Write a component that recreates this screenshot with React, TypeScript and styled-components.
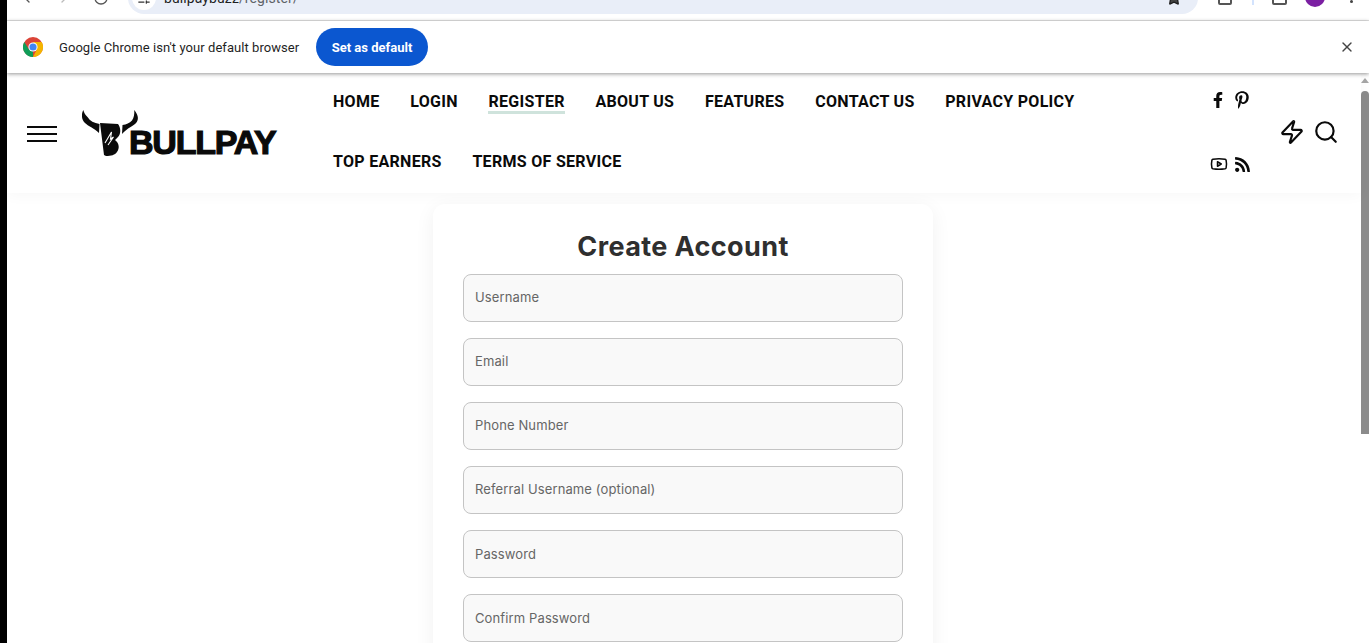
import React from 'react';
import styled, { createGlobalStyle } from 'styled-components';
import { ChevronLeft, ChevronRight, RotateCw, Star, X, Zap, Search, Youtube, SlidersHorizontal } from 'lucide-react';
import { FaFacebookF, FaPinterestP, FaRss } from 'react-icons/fa';

const Global = createGlobalStyle`
  html, body { margin: 0; padding: 0; height: 100%; overflow: hidden; background: #fff; }
  #root { height: 100%; }
  * { box-sizing: border-box; }
`;

const Screen = styled.div`
  width: 1369px;
  height: 643px;
  display: flex;
  overflow: hidden;
  background: #000;
  font-family: "Liberation Sans", Arial, sans-serif;
`;

const BlackEdge = styled.div`
  width: 7px;
  flex: none;
  background: #000;
`;

const Browser = styled.div`
  flex: 1;
  min-width: 0;
  display: flex;
  flex-direction: column;
  background: #fff;
`;

const Toolbar = styled.div`
  height: 21px;
  flex: none;
  display: flex;
  align-items: flex-end;
  overflow: hidden;
  border-bottom: 1px solid #e3e3e3;
  padding: 0 0 6px 12px;
  color: #555;
`;

const NavIcons = styled.div`
  display: flex;
  gap: 21px;
  align-items: center;
  height: 16px;
  width: 109px;
  flex: none;
  margin-bottom: 8px;
`;

const Omnibox = styled.div`
  width: 1070px;
  height: 32px;
  flex: none;
  background: #e9eef8;
  border-radius: 16px;
  display: flex;
  align-items: center;
  justify-content: space-between;
  padding: 0 16px 0 4px;
  font-family: "Roboto", sans-serif;
  font-size: 14px;
  letter-spacing: 0.1px;
  color: #1f1f1f;
`;

const SiteChip = styled.span`
  width: 24px;
  height: 24px;
  border-radius: 50%;
  background: #fff;
  margin-right: 8px;
  flex: none;
  display: flex;
  align-items: center;
  justify-content: center;
  color: #333;
`;

const Url = styled.span`
  flex: 1;
  span { color: #5f6368; }
`;

const ToolButton = styled.span<{ $w: number; $left: number }>`
  width: ${p => p.$w}px;
  height: 14px;
  flex: none;
  margin-left: ${p => p.$left}px;
  margin-bottom: 9px;
  border: 2px solid #555;
  border-radius: 2px;
`;

const ToolDivider = styled.span`
  width: 2px;
  height: 14px;
  flex: none;
  margin-left: 20px;
  margin-bottom: 9px;
  background: #d3e3fd;
`;

const Avatar = styled.span`
  width: 20px;
  height: 20px;
  border-radius: 50%;
  background: #7b1fa2;
  flex: none;
  margin-left: 18px;
  margin-bottom: 7px;
`;

const MenuDot = styled.span`
  width: 3px;
  height: 3px;
  border-radius: 50%;
  background: #444;
  flex: none;
  margin-left: 25px;
  margin-bottom: 11px;
`;

const Infobar = styled.div`
  height: 52px;
  flex: none;
  display: flex;
  align-items: center;
  padding: 0 14px 0 16px;
  background: #fff;
  position: relative;
  z-index: 2;
  box-shadow: 0 1px 4px rgba(0,0,0,.42);
  font-family: "Roboto", sans-serif;
  font-size: 13px;
  color: #1f1f1f;
`;

const InfoText = styled.span`
  margin-left: 16px;
  width: 257px;
  letter-spacing: 0.06px;
  white-space: nowrap;
`;

const DefaultButton = styled.button`
  height: 38px;
  width: 112px;
  border: 0;
  border-radius: 19px;
  background: #0b57d0;
  color: #fff;
  font-family: "Roboto", sans-serif;
  font-weight: 700;
  font-size: 13px;
`;

const InfoClose = styled.span`
  margin-left: auto;
  display: flex;
  color: #444;
`;

const Viewport = styled.div`
  flex: 1;
  min-height: 0;
  display: flex;
  background: #fff;
`;

const Page = styled.div`
  flex: 1;
  min-width: 0;
  display: flex;
  flex-direction: column;
`;

const Scrollbar = styled.div`
  width: 8px;
  flex: none;
  background: #fff;
  display: flex;
  flex-direction: column;
  align-items: center;
  padding-top: 5px;
`;

const ScrollArrow = styled.span`
  width: 0;
  height: 0;
  border-left: 4px solid transparent;
  border-right: 4px solid transparent;
  border-bottom: 5px solid #a6a6a6;
  margin-bottom: 8px;
`;

const ScrollThumb = styled.span`
  width: 8px;
  height: 343px;
  border-radius: 4px 4px 0 0;
  background: #8b8b8b;
`;

const Header = styled.header`
  height: 120px;
  flex: none;
  display: flex;
  background: #fff;
  box-shadow: 0 2px 14px rgba(0,0,0,.035);
  position: relative;
`;

const Burger = styled.div`
  width: 30px;
  margin: 53px 0 0 20px;
  flex: none;
  display: flex;
  flex-direction: column;
  gap: 5px;
  span { height: 2px; background: #0a0a0a; display: block; }
`;

const Logo = styled.div`
  width: 200px;
  margin: 37px 0 0 25px;
  flex: none;
  display: flex;
  align-items: flex-start;
  height: 48px;
`;

const LogoWord = styled.span`
  font-family: "Liberation Sans", sans-serif;
  font-weight: 700;
  font-size: 34px;
  line-height: 34px;
  color: #0a0a0a;
  letter-spacing: -1.2px;
  -webkit-text-stroke: 1.2px #0a0a0a;
  margin: 15px 0 0 -11px;
`;

const Nav = styled.nav`
  width: 812px;
  margin-left: 51px;
  flex: none;
  display: flex;
  flex-wrap: wrap;
  column-gap: 30.7px;
  align-content: flex-start;
`;

const NavLink = styled.a<{ $active?: boolean }>`
  height: 60px;
  display: flex;
  align-items: center;
  font-family: "Roboto", sans-serif;
  font-weight: 700;
  font-size: 16px;
  letter-spacing: 0.3px;
  color: #0a0a0a;
  span {
    display: block;
    line-height: 18px;
    border-bottom: 3px solid ${p => (p.$active ? '#cfe3dc' : 'transparent')};
  }
`;

const Social = styled.div`
  width: 60px;
  margin-left: 65px;
  flex: none;
  display: grid;
  grid-template-columns: 1fr;
  align-content: start;
  row-gap: 46px;
  padding-top: 18px;
`;

const SocialRow = styled.div<{ $gap: number }>`
  display: flex;
  align-items: center;
  gap: ${p => p.$gap}px;
  height: 18px;
  color: #0a0a0a;
`;

const HeaderActions = styled.div`
  display: flex;
  gap: 8px;
  margin: 46px 0 0 9px;
  height: 26px;
  color: #0a0a0a;
`;

const Main = styled.main`
  flex: 1;
  min-height: 0;
  overflow: hidden;
  display: flex;
  justify-content: center;
  padding: 11px 0 0 0;
  background: #fff;
`;

const Card = styled.form`
  width: 500px;
  margin-right: 2px;
  height: 500px;
  flex: none;
  background: #fff;
  border-radius: 12px;
  padding: 25px 30px;
  box-shadow: 0 4px 20px rgba(0,0,0,.06);
`;

const Title = styled.h1`
  margin: 0 0 9px;
  text-align: center;
  font-family: "Inter", sans-serif;
  font-size: 27px;
  line-height: 36px;
  font-weight: 700;
  letter-spacing: 0.4px;
  color: #2f2f2f;
`;

const Field = styled.input<{ $lift: boolean }>`
  display: block;
  width: 100%;
  height: 48px;
  margin-bottom: 16px;
  padding: 0 11px ${p => (p.$lift ? 2 : 0)}px;
  background: #f9f9f9;
  border: 1px solid #c4c4c4;
  border-radius: 8px;
  font-family: "Inter", sans-serif;
  font-size: 13px;
  letter-spacing: 0.12px;
  &::placeholder { color: #666; opacity: 1; }
`;

const Bull = () => (
  <svg width="58" height="48" viewBox="0 0 58 48" style={{ flex: 'none' }}>
    <path fill="#0a0a0a" d="M1.3 0C-1 4-.5 10 3 13c3 3 9 5 14 10l.5-9C12 13 8 11 5.500 7 3.500 5 2 3 1.300 0z" />
    <path fill="#0a0a0a" d="M52.300 0c3 4 5 8 2.500 12C52 16 45 18 40 24l.5-9c4-.5 7-2 9.500-4.500C52 8 52.500 4 52.300 0z" />
    <path fill="#0a0a0a" d="M18 13l18 1c3 4 3 10 0 13l-3 3c4 3 5 8 2 12-2 3-6 4-11 4l-2-1z" />
    <path fill="none" stroke="#fff" strokeWidth="1.100" d="M23 33l6.500-11-1 7 3-2-5.500 8" />
  </svg>
);

const fields = ['Username', 'Email', 'Phone Number', 'Referral Username (optional)', 'Password', 'Confirm Password'];
const navItems = ['HOME', 'LOGIN', 'REGISTER', 'ABOUT US', 'FEATURES', 'CONTACT US', 'PRIVACY POLICY', 'TOP EARNERS', 'TERMS OF SERVICE'];

export default function App() {
  return (
    <Screen>
      <Global />
      <BlackEdge />
      <Browser>
        <Toolbar>
          <NavIcons>
            <ChevronLeft size={16} />
            <ChevronRight size={16} color="#bbb" />
            <RotateCw size={16} />
          </NavIcons>
          <Omnibox>
            <SiteChip><SlidersHorizontal size={14} /></SiteChip>
            <Url>bullpaybuzz<span>/register/</span></Url>
            <Star size={16} fill="#444" />
          </Omnibox>
          <ToolButton $w={14} $left={20} />
          <ToolDivider />
          <ToolButton $w={15} $left={18} />
          <Avatar />
          <MenuDot />
        </Toolbar>
        <Infobar>
          <svg width="20" height="20" viewBox="0 0 20 20">
            <circle cx="10" cy="10" r="10" fill="#db4437" />
            <path fill="#0f9d58" d="M10 20A10 10 0 0 1 1.3 5L6 12.5l4 2z" />
            <path fill="#f4b400" d="M10 20a10 10 0 0 0 8.7-15H10l4 7z" />
            <circle cx="10" cy="10" r="4.6" fill="#fff" />
            <circle cx="10" cy="10" r="3.6" fill="#4285f4" />
          </svg>
          <InfoText>Google Chrome isn't your default browser</InfoText>
          <DefaultButton type="button">Set as default</DefaultButton>
          <InfoClose><X size={16} /></InfoClose>
        </Infobar>
        <Viewport>
          <Page>
            <Header>
              <Burger><span /><span /><span /></Burger>
              <Logo>
                <Bull />
                <LogoWord>BULLPAY</LogoWord>
              </Logo>
              <Nav>
                {navItems.map(item => (
                  <NavLink key={item} $active={item === 'REGISTER'}><span>{item}</span></NavLink>
                ))}
              </Nav>
              <Social>
                <SocialRow $gap={7}><FaFacebookF size={16} /><FaPinterestP size={18} /></SocialRow>
                <SocialRow $gap={6}><Youtube size={18} /><FaRss size={17} /></SocialRow>
              </Social>
              <HeaderActions>
                <Zap size={26} />
                <Search size={26} />
              </HeaderActions>
            </Header>
            <Main>
              <Card>
                <Title>Create Account</Title>
                {fields.map((f, i) => <Field key={f} placeholder={f} $lift={i < 4} />)}
              </Card>
            </Main>
          </Page>
          <Scrollbar>
            <ScrollArrow />
            <ScrollThumb />
          </Scrollbar>
        </Viewport>
      </Browser>
    </Screen>
  );
}
